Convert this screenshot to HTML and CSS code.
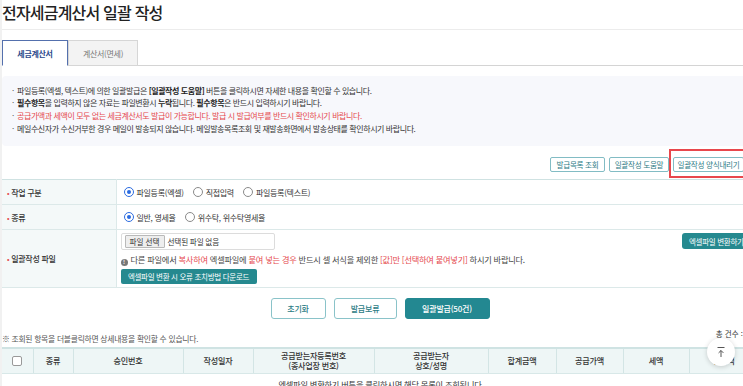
FILE: index.html
```html
<!DOCTYPE html>
<html lang="ko">
<head>
<meta charset="utf-8">
<title>전자세금계산서 일괄 작성</title>
<link rel="stylesheet" href="styles.css">
</head>
<body>
<div class="page">
  <h1 class="title">전자세금계산서 일괄 작성</h1>

  <div class="tabs">
    <div class="tab active">세금계산서</div>
    <div class="tab">계산서(면세)</div>
  </div>

  <div class="info">
    <ul>
      <li>파일등록(엑셀, 텍스트)에 의한 일괄발급은 <b>[일괄작성 도움말]</b> 버튼을 클릭하시면 자세한 내용을 확인할 수 있습니다.</li>
      <li><b>필수항목</b>을 입력하지 않은 자료는 파일변환시 <b>누락</b>됩니다. <b>필수항목</b>은 반드시 입력하시기 바랍니다.</li>
      <li class="red">공급가액과 세액이 모두 없는 세금계산서도 발급이 가능합니다. 발급 시 발급여부를 반드시 확인하시기 바랍니다.</li>
      <li>메일수신자가 수신거부한 경우 메일이 발송되지 않습니다. 메일발송목록조회 및 재발송화면에서 발송상태를 확인하시기 바랍니다.</li>
    </ul>
  </div>

  <div class="toolbar">
    <button class="btn-line b1">발급목록 조회</button>
    <button class="btn-line b2">일괄작성 도움말</button>
    <button class="btn-line b3 hl">일괄작성 양식내리기</button>
  </div>

  <table class="form">
    <tr class="r1">
      <th><span class="req">•</span>작업 구분</th>
      <td>
        <div class="radios">
          <label class="radio"><span class="dot on"></span>파일등록(엑셀)</label>
          <label class="radio"><span class="dot"></span>직접입력</label>
          <label class="radio"><span class="dot"></span>파일등록(텍스트)</label>
        </div>
      </td>
    </tr>
    <tr class="r2">
      <th><span class="req">•</span>종류</th>
      <td>
        <div class="radios">
          <label class="radio"><span class="dot on"></span>일반, 영세율</label>
          <label class="radio"><span class="dot"></span>위수탁, 위수탁영세율</label>
        </div>
      </td>
    </tr>
    <tr class="r3">
      <th><span class="req">•</span>일괄작성 파일</th>
      <td>
        <div class="filecell">
          <div class="filecol">
            <div class="filebox"><span class="filebtn">파일 선택</span><span class="filename">선택된 파일 없음</span></div>
            <p class="hint"><span class="ico">!</span>다른 파일에서 <em>복사하여</em> 엑셀파일에 <em>붙여 넣는 경우</em> 반드시 셀 서식을 제외한 <em>[값]만 [선택하여 붙여넣기]</em> 하시기 바랍니다.</p>
            <button class="btn-fill small">엑셀파일 변환 시 오류 조치방법 다운로드</button>
          </div>
          <button class="btn-fill convert">엑셀파일 변환하기</button>
        </div>
      </td>
    </tr>
  </table>

  <div class="actions">
    <button class="btn-act w1">초기화</button>
    <button class="btn-act w2">발급보류</button>
    <button class="btn-act primary w3">일괄발급(50건)</button>
  </div>

  <div class="list-head">
    <span class="note">※ 조회된 항목을 더블클릭하면 상세내용을 확인할 수 있습니다.</span>
    <span class="total">총 건수 : 0건</span>
  </div>

  <table class="grid">
    <colgroup>
      <col class="c1"><col class="c2"><col class="c3"><col class="c4"><col class="c5">
      <col class="c6"><col class="c7"><col class="c8"><col class="c9"><col class="c10">
    </colgroup>
    <thead>
      <tr>
        <th><span class="chk"></span></th>
        <th>종류</th>
        <th>승인번호</th>
        <th>작성일자</th>
        <th>공급받는자등록번호<br>(종사업장 번호)</th>
        <th>공급받는자<br>상호/성명</th>
        <th>합계금액</th>
        <th>공급가액</th>
        <th>세액</th>
        <th>현금액</th>
      </tr>
    </thead>
    <tbody>
      <tr><td colspan="10" class="empty">엑셀파일 변환하기 버튼을 클릭하시면 해당 목록이 조회됩니다</td></tr>
    </tbody>
  </table>

  <button class="top-btn" aria-label="맨 위로">
    <svg width="10" height="12" viewBox="0 0 10 12"><path d="M1.5 1.5h7" stroke="#555" stroke-width="1" fill="none"/><path d="M5 11V4.5M2.6 6.9L5 4.5l2.4 2.4" stroke="#555" stroke-width="1" fill="none"/></svg>
  </button>
</div>
</body>
</html>
```

FILE: styles.css
```css
html, body {
  margin: 0;
  padding: 0;
  overflow: hidden;
}
body {
  background: #f1f1f1;
  font-family: "Noto Sans CJK KR", "Noto Sans", sans-serif;
  color: #333;
  width: 743px;
  height: 386px;
}
button {
  font-family: inherit;
  cursor: pointer;
}
.page {
  margin-left: 2px;
  width: 756px;
  height: 386px;
  background: #fff;
  position: relative;
}
.title {
  margin: 0;
  height: 29px;
  border-bottom: 1px solid #ececec;
  font-size: 16px;
  font-weight: 500;
  line-height: 24px;
  letter-spacing: -0.8px;
  color: #222;
}
.tabs {
  margin-top: 10px;
  height: 26px;
  box-sizing: border-box;
  display: flex;
  border-bottom: 1px solid #d4d4d4;
}
.tab {
  box-sizing: border-box;
  height: 26px;
  width: 70px;
  border: 1px solid #d6d6d6;
  background: #f3f3f3;
  font-size: 8px;
  color: #777;
  display: flex;
  align-items: center;
  justify-content: center;
  letter-spacing: -0.3px;
}
.tab.active {
  width: 66px;
  background: #fff;
  border: 1px solid #5470ad;
  border-bottom-color: #fff;
  color: #2c4a8c;
  font-weight: 700;
}
.info {
  margin-top: 10px;
  height: 70px;
  box-sizing: border-box;
  background: #f7f8fc;
  border-radius: 4px;
  padding: 8.6px 10px 0 10px;
}
.info ul {
  margin: 0;
  padding: 0;
  list-style: none;
}
.info li {
  font-size: 8px;
  line-height: 12.8px;
  letter-spacing: -0.42px;
  color: #333;
  padding-left: 5px;
  position: relative;
  white-space: nowrap;
}
.info li::before {
  content: "·";
  position: absolute;
  left: 0;
  color: #555;
}
.info li b {
  font-weight: 700;
  color: #222;
}
.info li.red {
  color: #e5484d;
}
.toolbar {
  margin-top: 11px;
  display: flex;
  justify-content: flex-end;
  gap: 4px;
  padding-right: 14px;
}
.btn-line {
  height: 15px;
  padding: 0;
  border: 1px solid #82bcc4;
  border-radius: 2px;
  background: #fff;
  color: #2d7b85;
  font-size: 7.6px;
  letter-spacing: -0.3px;
  line-height: 13px;
  white-space: nowrap;
  text-align: center;
}
.btn-line.b1 { width: 55px; }
.btn-line.b2 { width: 60px; }
.btn-line.b3 { width: 71px; }
.hl {
  position: relative;
}
.hl::after {
  content: "";
  position: absolute;
  left: -5px;
  right: -2px;
  top: -9px;
  bottom: -7px;
  border: 2px solid #e8474c;
}
.form {
  margin-top: 7px;
  width: 100%;
  border-collapse: collapse;
  border-top: 1px solid #cfe2e2;
}
.form th,
.form td {
  border-bottom: 1px solid #dce9e9;
  padding: 0;
}
.form th {
  width: 114px;
  box-sizing: border-box;
  background: #f4f9f9;
  border-right: 1px solid #dce9e9;
  text-align: left;
  font-size: 8px;
  font-weight: 500;
  color: #333;
  letter-spacing: -0.3px;
  padding-left: 5px;
}
.form .req {
  color: #e5484d;
  margin-right: 2px;
  font-size: 7px;
}
.form .r1, .form .r2 { height: 25px; }
.form .r3 { height: 57px; }
.form td {
  padding-left: 7px;
  font-size: 7.5px;
}
.radios {
  display: flex;
  align-items: center;
  gap: 9px;
}
.radio {
  display: flex;
  align-items: center;
  gap: 3px;
  font-size: 8px;
  letter-spacing: -0.3px;
  color: #333;
}
.dot {
  width: 10px;
  height: 10px;
  box-sizing: border-box;
  border-radius: 50%;
  border: 1px solid #8a8a8a;
  background: #fff;
  position: relative;
}
.dot.on {
  border-color: #2b6be0;
}
.dot.on::after {
  content: "";
  position: absolute;
  left: 2px;
  top: 2px;
  width: 4px;
  height: 4px;
  border-radius: 50%;
  background: #2b6be0;
}
.filecell {
  display: flex;
  justify-content: space-between;
  align-items: flex-start;
  padding: 3px 2px 3px 0;
  margin-left: -3px;
}
.filecol {
  display: flex;
  flex-direction: column;
  align-items: flex-start;
}
.filebox {
  width: 154px;
  height: 17px;
  box-sizing: border-box;
  border: 1px solid #dcdcdc;
  border-radius: 2px;
  display: flex;
  align-items: center;
  padding-left: 3px;
  gap: 3px;
}
.filebtn {
  height: 13px;
  box-sizing: border-box;
  padding: 0 4px;
  background: #eeeeee;
  border: 1px solid #b9b9b9;
  border-radius: 1px;
  font-size: 7.6px;
  line-height: 11px;
  color: #333;
}
.filename {
  font-size: 7.6px;
  color: #333;
  letter-spacing: -0.2px;
}
.hint {
  margin: 3px 0 0 0;
  font-size: 8.2px;
  line-height: 12px;
  letter-spacing: -0.22px;
  color: #444;
  white-space: nowrap;
}
.hint em {
  font-style: normal;
  color: #e5484d;
}
.ico {
  width: 7px;
  height: 7px;
  border-radius: 50%;
  background: #777;
  color: #fff;
  font-size: 5.5px;
  font-weight: 700;
  display: inline-flex;
  align-items: center;
  justify-content: center;
  margin-right: 3px;
  line-height: 1;
  vertical-align: -1px;
}
.btn-fill {
  border: 0;
  background: #25898f;
  color: #fff;
  font-size: 7.5px;
  letter-spacing: -0.3px;
  border-radius: 2px;
  padding: 0 6px;
  white-space: nowrap;
}
.btn-fill.small {
  margin-top: 3px;
  height: 15px;
  width: 136px;
}
.btn-fill.convert {
  height: 16px;
  width: 74px;
  border-radius: 3px;
  text-align: left;
  padding-left: 7px;
}
.actions {
  margin-top: 10px;
  display: flex;
  justify-content: center;
  gap: 8px;
}
.btn-act {
  height: 21px;
  border-radius: 3px;
  border: 1px solid #8ac3c9;
  background: #fff;
  color: #2b7b84;
  font-size: 8px;
  font-weight: 500;
  letter-spacing: -0.2px;
}
.btn-act.w1 { width: 55px; }
.btn-act.w2 { width: 63px; }
.btn-act.w3 { width: 85px; }
.btn-act.primary {
  background: #238891;
  border-color: #238891;
  color: #fff;
}
.list-head {
  margin-top: 8px;
  height: 20px;
  display: flex;
  justify-content: space-between;
}
.note {
  align-self: flex-end;
  font-size: 7.8px;
  line-height: 12px;
  color: #555;
  letter-spacing: -0.25px;
  padding-bottom: 2px;
}
.total {
  align-self: flex-start;
  font-size: 7.5px;
  line-height: 14px;
  color: #333;
  padding-right: 2px;
  white-space: nowrap;
}
.grid {
  width: 756px;
  table-layout: fixed;
  border-collapse: collapse;
}
.grid .c1 { width: 31px; }
.grid .c2 { width: 40px; }
.grid .c3 { width: 110px; }
.grid .c4 { width: 70px; }
.grid .c5 { width: 121px; }
.grid .c6 { width: 114px; }
.grid .c7 { width: 68px; }
.grid .c8 { width: 67px; }
.grid .c9 { width: 66px; }
.grid .c10 { width: 69px; }
.grid thead th {
  height: 25px;
  padding: 0;
  box-sizing: border-box;
  background: #eef6f6;
  border-top: 2px solid #cfe3e3;
  border-bottom: 1px solid #d8e8e8;
  border-left: 1px solid #d3e5e5;
  font-size: 8.1px;
  line-height: 10px;
  font-weight: 500;
  color: #333;
  letter-spacing: -0.25px;
}
.grid thead th:first-child { border-left: 0; }
.chk {
  display: inline-block;
  width: 10px;
  height: 10px;
  box-sizing: border-box;
  border: 1px solid #999;
  border-radius: 2px;
  background: #fff;
  vertical-align: middle;
}
.empty {
  text-align: center;
  font-size: 8.2px;
  line-height: 10px;
  color: #333;
  padding-top: 5px;
  letter-spacing: -0.2px;
  white-space: nowrap;
}
.top-btn {
  position: absolute;
  left: 705px;
  top: 338px;
  width: 28px;
  height: 28px;
  border-radius: 50%;
  border: 0;
  background: #fff;
  box-shadow: 0 1px 5px rgba(0, 0, 0, 0.18);
  display: flex;
  align-items: center;
  justify-content: center;
  padding: 0;
}
```
